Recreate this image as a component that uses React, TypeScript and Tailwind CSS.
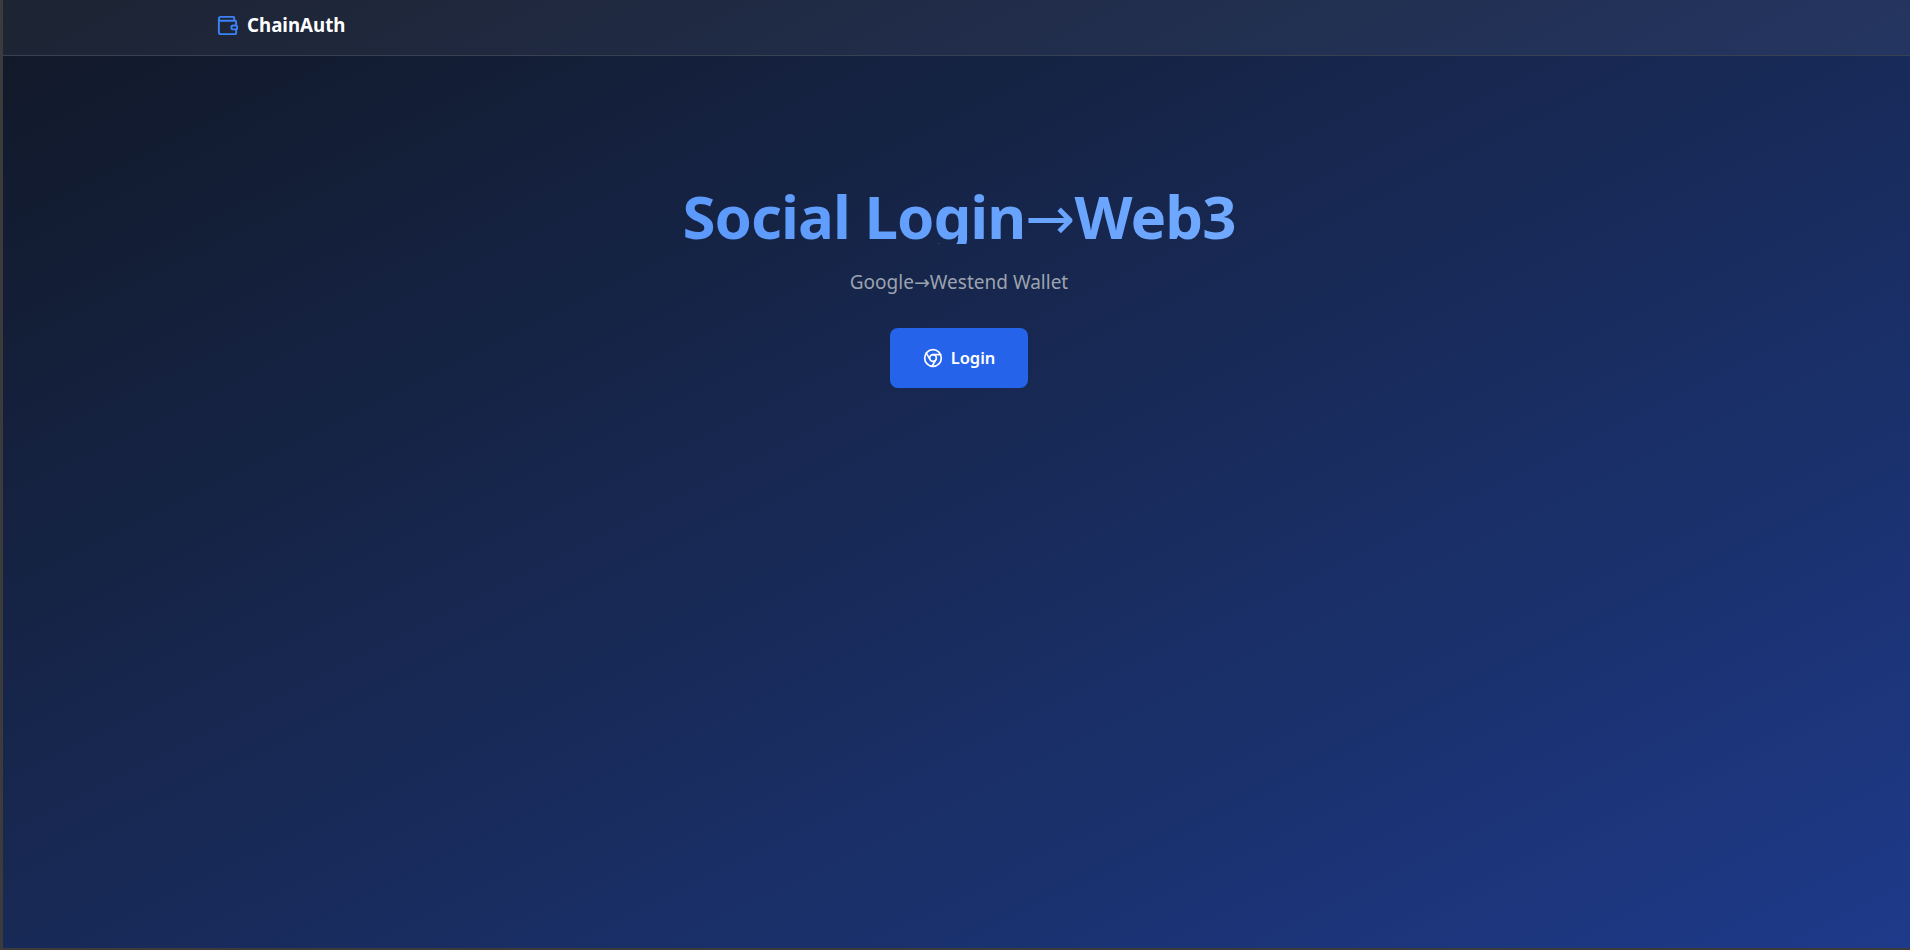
import { Chrome, Wallet } from 'lucide-react'

export default function App() {
  return (
    <div className="h-[950px] overflow-hidden border-l-[3px] border-b-[2px] border-[#3b3b3b] bg-gradient-to-br from-[#111827] to-[#1e3a8a] font-['Noto_Sans','Open_Sans',sans-serif] text-white">
      <header className="h-[56px] border-b border-[#374151] bg-white/5">
        <div className="flex h-[50px] items-center gap-2 pl-[213px]">
          <Wallet className="h-[23px] w-[23px] text-[#3b82f6]" strokeWidth={2} />
          <span className="text-[18.7px] font-bold">ChainAuth</span>
        </div>
      </header>
      <main className="flex flex-col items-center pt-[128px] pl-[5px]">
        <h1 className="h-[60px] overflow-hidden bg-gradient-to-r from-[#5b99fb] to-[#70a9ff] bg-clip-text text-[60px] leading-[64px] font-bold tracking-[-1px] text-transparent">
          Social Login<span className="font-['DejaVu_Sans'] leading-none font-normal">→</span>Web3
        </h1>
        <p className="mt-[24px] text-[19px] leading-[28px] text-[#9ca3af]">
          Google<span className="font-['DejaVu_Sans'] leading-none">→</span>Westend Wallet
        </p>
        <button className="mt-[32px] flex h-[60px] w-[138px] items-center justify-center gap-2 rounded-lg bg-[#2563eb] text-[16.5px] font-semibold">
          <Chrome className="h-5 w-5" />
          Login
        </button>
      </main>
    </div>
  )
}
